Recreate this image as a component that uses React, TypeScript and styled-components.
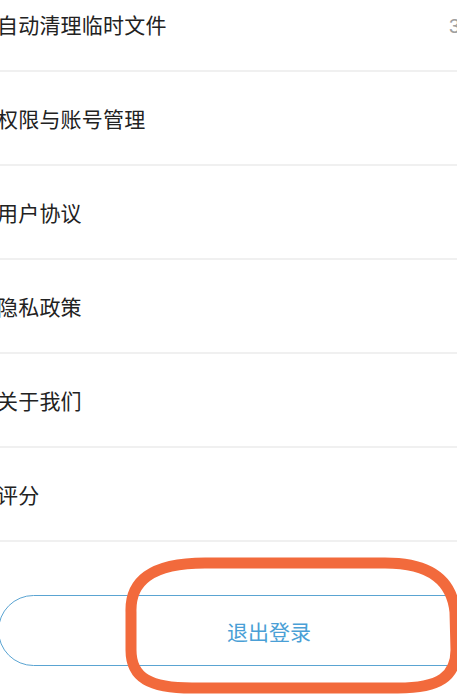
import React from "react";
import styled, { createGlobalStyle } from "styled-components";

const GlobalStyle = createGlobalStyle`
  html, body {
    margin: 0;
    padding: 0;
    background: #ffffff;
    overflow: hidden;
  }
  body {
    font-family: "Noto Sans CJK SC", "Noto Sans", sans-serif;
  }
`;

const Screen = styled.div`
  position: relative;
  width: 457px;
  height: 694px;
  overflow: hidden;
  background: #ffffff;
`;

const List = styled.div`
  margin-top: -22px;
  margin-left: -3px;
  display: flex;
  flex-direction: column;
`;

const Row = styled.div`
  height: 92px;
  display: flex;
  align-items: center;
  border-bottom: 2px solid #f0f0f0;
  white-space: nowrap;
`;

const Label = styled.span`
  flex: 0 0 452px;
  font-size: 21px;
  color: #222222;
  letter-spacing: 0.2px;
`;

const Value = styled.span`
  font-size: 20px;
  color: #a0a0a0;
  font-family: "Liberation Sans", "Noto Sans CJK SC", sans-serif;
`;

const Footer = styled.div`
  padding: 53px 0 0 0;
  margin-left: -2px;
`;

const LogoutButton = styled.button`
  width: 542px;
  height: 71px;
  border: 1.5px solid #5aa4d2;
  border-radius: 36px;
  background: #ffffff;
  color: #4a9fd6;
  font-family: "Noto Sans CJK SC", sans-serif;
  font-size: 21px;
  padding: 0;
  display: flex;
  align-items: center;
  justify-content: center;
`;

const Annotation = styled.svg`
  position: absolute;
  left: 0;
  top: 0;
  pointer-events: none;
`;

const items: { label: string; value?: string }[] = [
  { label: "自动清理临时文件", value: "3天" },
  { label: "权限与账号管理" },
  { label: "用户协议" },
  { label: "隐私政策" },
  { label: "关于我们" },
  { label: "评分" },
];

export default function App() {
  return (
    <>
      <GlobalStyle />
      <Screen>
        <List>
          {items.map((item) => (
            <Row key={item.label}>
              <Label>{item.label}</Label>
              {item.value && <Value>{item.value}</Value>}
            </Row>
          ))}
        </List>
        <Footer>
          <LogoutButton>退出登录</LogoutButton>
        </Footer>
        <Annotation width="457" height="694" viewBox="0 0 457 694">
          <path
            d="M 131 612 C 130 582, 150 563, 205 563 L 385 563 C 432 563, 452 582, 455 612 L 456 650 C 456 676, 440 688, 398 688 L 192 688 C 150 688, 131 678, 131 650 Z"
            fill="none"
            stroke="#f26a3c"
            strokeWidth="11"
            strokeLinejoin="round"
          />
        </Annotation>
      </Screen>
    </>
  );
}
